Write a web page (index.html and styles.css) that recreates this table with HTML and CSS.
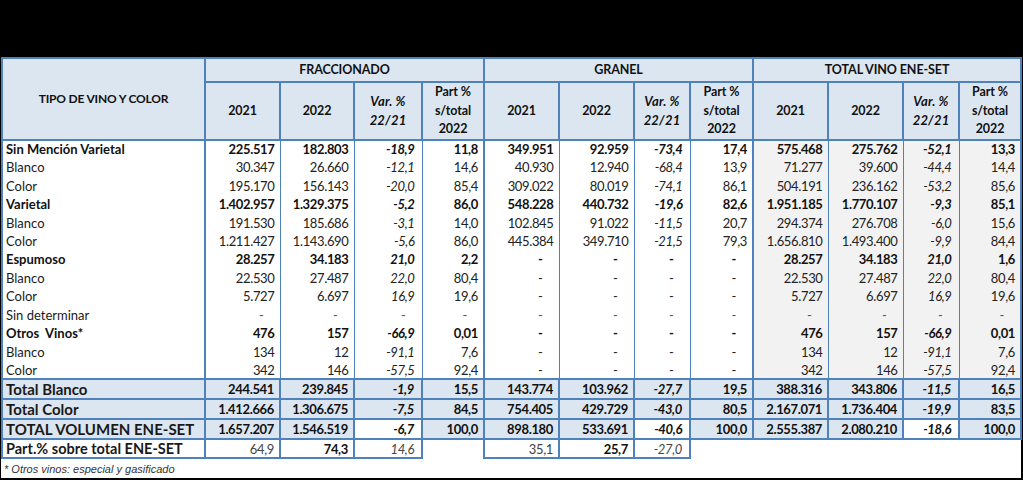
FILE: index.html
```html
<!DOCTYPE html>
<html lang="es">
<head>
<meta charset="utf-8">
<title>Vino ENE-SET</title>
<link rel="stylesheet" href="styles.css">
</head>
<body>
<div class="frame">
  <div class="sheet">
    <table class="t">
      <colgroup>
        <col class="w-lab">
        <col class="w-75"><col class="w-74"><col class="w-68"><col class="w-62">
        <col class="w-75"><col class="w-75"><col class="w-56"><col class="w-63">
        <col class="w-75"><col class="w-75"><col class="w-56"><col class="w-62">
      </colgroup>
      <thead>
        <tr class="h1">
          <th rowspan="2" class="hl">TIPO DE VINO Y COLOR</th>
          <th colspan="4">FRACCIONADO</th>
          <th colspan="4">GRANEL</th>
          <th colspan="4">TOTAL VINO ENE-SET</th>
        </tr>
        <tr class="h2">
          <th>2021</th><th>2022</th><th class="hv">Var. %<br>22/21</th><th>Part %<br>s/total<br>2022</th>
          <th>2021</th><th>2022</th><th class="hv">Var. %<br>22/21</th><th>Part %<br>s/total<br>2022</th>
          <th>2021</th><th>2022</th><th class="hv">Var. %<br>22/21</th><th>Part %<br>s/total<br>2022</th>
        </tr>
      </thead>
      <tbody class="body">
        <tr class="b"><td class="lab">Sin Mención Varietal</td><td>225.517</td><td>182.803</td><td class="v">-18,9</td><td>11,8</td><td class="s">349.951</td><td>92.959</td><td class="v">-73,4</td><td>17,4</td><td class="s t">575.468</td><td class="t">275.762</td><td class="v t">-52,1</td><td class="t e">13,3</td></tr>
        <tr><td class="lab">Blanco</td><td>30.347</td><td>26.660</td><td class="v">-12,1</td><td>14,6</td><td class="s">40.930</td><td>12.940</td><td class="v">-68,4</td><td>13,9</td><td class="s t">71.277</td><td class="t">39.600</td><td class="v t">-44,4</td><td class="t e">14,4</td></tr>
        <tr><td class="lab">Color</td><td>195.170</td><td>156.143</td><td class="v">-20,0</td><td>85,4</td><td class="s">309.022</td><td>80.019</td><td class="v">-74,1</td><td>86,1</td><td class="s t">504.191</td><td class="t">236.162</td><td class="v t">-53,2</td><td class="t e">85,6</td></tr>
        <tr class="b"><td class="lab">Varietal</td><td>1.402.957</td><td>1.329.375</td><td class="v">-5,2</td><td>86,0</td><td class="s">548.228</td><td>440.732</td><td class="v">-19,6</td><td>82,6</td><td class="s t">1.951.185</td><td class="t">1.770.107</td><td class="v t">-9,3</td><td class="t e">85,1</td></tr>
        <tr><td class="lab">Blanco</td><td>191.530</td><td>185.686</td><td class="v">-3,1</td><td>14,0</td><td class="s">102.845</td><td>91.022</td><td class="v">-11,5</td><td>20,7</td><td class="s t">294.374</td><td class="t">276.708</td><td class="v t">-6,0</td><td class="t e">15,6</td></tr>
        <tr><td class="lab">Color</td><td>1.211.427</td><td>1.143.690</td><td class="v">-5,6</td><td>86,0</td><td class="s">445.384</td><td>349.710</td><td class="v">-21,5</td><td>79,3</td><td class="s t">1.656.810</td><td class="t">1.493.400</td><td class="v t">-9,9</td><td class="t e">84,4</td></tr>
        <tr class="b"><td class="lab">Espumoso</td><td>28.257</td><td>34.183</td><td class="v">21,0</td><td>2,2</td><td class="s d">-</td><td class="d">-</td><td class="d">-</td><td class="d">-</td><td class="s t">28.257</td><td class="t">34.183</td><td class="v t">21,0</td><td class="t e">1,6</td></tr>
        <tr><td class="lab">Blanco</td><td>22.530</td><td>27.487</td><td class="v">22,0</td><td>80,4</td><td class="s d">-</td><td class="d">-</td><td class="d">-</td><td class="d">-</td><td class="s t">22.530</td><td class="t">27.487</td><td class="v t">22,0</td><td class="t e">80,4</td></tr>
        <tr><td class="lab">Color</td><td>5.727</td><td>6.697</td><td class="v">16,9</td><td>19,6</td><td class="s d">-</td><td class="d">-</td><td class="d">-</td><td class="d">-</td><td class="s t">5.727</td><td class="t">6.697</td><td class="v t">16,9</td><td class="t e">19,6</td></tr>
        <tr class="lt"><td class="lab">Sin determinar</td><td class="d">-</td><td class="d">-</td><td class="d">-</td><td class="d">-</td><td class="s d">-</td><td class="d">-</td><td class="d">-</td><td class="d">-</td><td class="s t d">-</td><td class="t d">-</td><td class="t d">-</td><td class="t e d">-</td></tr>
        <tr class="b"><td class="lab">Otros&nbsp; Vinos*</td><td>476</td><td>157</td><td class="v">-66,9</td><td>0,01</td><td class="s d">-</td><td class="d">-</td><td class="d">-</td><td class="d">-</td><td class="s t">476</td><td class="t">157</td><td class="v t">-66,9</td><td class="t e">0,01</td></tr>
        <tr><td class="lab">Blanco</td><td>134</td><td>12</td><td class="v">-91,1</td><td>7,6</td><td class="s d">-</td><td class="d">-</td><td class="d">-</td><td class="d">-</td><td class="s t">134</td><td class="t">12</td><td class="v t">-91,1</td><td class="t e">7,6</td></tr>
        <tr><td class="lab">Color</td><td>342</td><td>146</td><td class="v">-57,5</td><td>92,4</td><td class="s d">-</td><td class="d">-</td><td class="d">-</td><td class="d">-</td><td class="s t">342</td><td class="t">146</td><td class="v t">-57,5</td><td class="t e">92,4</td></tr>
      </tbody>
      <tbody class="tot">
        <tr><td class="lab">Total Blanco</td><td>244.541</td><td>239.845</td><td class="v">-1,9</td><td>15,5</td><td>143.774</td><td>103.962</td><td class="v">-27,7</td><td>19,5</td><td>388.316</td><td>343.806</td><td class="v">-11,5</td><td>16,5</td></tr>
        <tr><td class="lab">Total Color</td><td>1.412.666</td><td>1.306.675</td><td class="v">-7,5</td><td>84,5</td><td>754.405</td><td>429.729</td><td class="v">-43,0</td><td>80,5</td><td>2.167.071</td><td>1.736.404</td><td class="v">-19,9</td><td>83,5</td></tr>
        <tr><td class="lab">TOTAL VOLUMEN ENE-SET</td><td>1.657.207</td><td>1.546.519</td><td class="v wh">-6,7</td><td>100,0</td><td>898.180</td><td>533.691</td><td class="v wh">-40,6</td><td>100,0</td><td>2.555.387</td><td>2.080.210</td><td class="v wh">-18,6</td><td>100,0</td></tr>
        <tr class="part"><td class="lab">Part.% sobre total ENE-SET</td><td class="g">64,9</td><td class="bb">74,3</td><td class="v g">14,6</td><td class="x"></td><td class="g">35,1</td><td class="bb">25,7</td><td class="v g">-27,0</td><td class="x"></td><td class="x"></td><td class="x"></td><td class="x"></td><td class="x"></td></tr>
      </tbody>
    </table>
    <div class="note">* Otros vinos: especial y gasificado</div>
  </div>
</div>
</body>
</html>
```

FILE: styles.css
```css
html, body {
  margin: 0;
  padding: 0;
  background: #000;
}

.frame {
  width: 1023px;
  height: 480px;
  box-sizing: border-box;
  padding: 57px 2px 2px 1px;
  background: #000;
  display: flex;
  flex-direction: column;
}

.sheet {
  flex: 1;
  background: #fff;
  display: flex;
  flex-direction: column;
}

.t {
  border-collapse: collapse;
  table-layout: fixed;
  width: 1019px;
  font-family: Lato, "Open Sans", sans-serif;
  font-size: 13px;
  letter-spacing: -0.35px;
  color: #222;
}

.w-lab { width: 203px; }
.w-75 { width: 75px; }
.w-74 { width: 74px; }
.w-68 { width: 68px; }
.w-62 { width: 62px; }
.w-63 { width: 63px; }
.w-56 { width: 56px; }

.t th {
  background: #dce6f1;
  border: 2px solid #4f81bd;
  font-weight: 700;
  font-size: 12.5px;
  letter-spacing: -0.1px;
  color: #111;
  padding: 0;
  line-height: 18.5px;
  text-align: center;
}

.t th.hl { font-size: 12px; letter-spacing: -0.2px; }
.t th.hv { font-style: italic; font-size: 13px; letter-spacing: 0.2px; }

.h1 { height: 24px; }
.h2 { height: 55px; }

.t td {
  padding: 0 5px 0 0;
  text-align: right;
  white-space: nowrap;
  overflow: hidden;
  border-left: 1px solid #4f81bd;
  border-right: 1px solid #4f81bd;
  line-height: 16px;
}

.body tr { height: 18.46px; }

.t td.lab {
  text-align: left;
  padding-left: 3px;
  letter-spacing: 0;
  border-left: 2px solid #4f81bd;
  border-right: 2px solid #4f81bd;
  color: #1a1a1a;
}

.t td.s { border-left: 2px solid #4f81bd; }
.t td.e { border-right: 2px solid #4f81bd; }
.t td.v { font-style: italic; padding-right: 7px; }
.t td.t { background: #f2f2f2; }
.t td.d { padding-right: 16px; }

.body tr.b td { font-weight: 700; color: #111; }
.body tr.lt td.d { color: #555; }

.tot tr { height: 20px; }

.tot td {
  border: 2px solid #4f81bd;
  background: #dce6f1;
  font-weight: 700;
  color: #111;
}

.t .tot td.lab { font-size: 15px; }
.tot td.wh { background: #fff; }

.tot tr.part { height: 19px; }

.tot .part td {
  background: #fff;
  font-weight: 400;
}

.t .tot .part td.lab { font-weight: 700; font-size: 14.5px; }
.tot .part td.g { color: #444; }
.tot .part td.bb { font-weight: 700; color: #111; }
.tot .part td.x { border: none; }

.note {
  font-family: "Liberation Sans", Arial, sans-serif;
  font-style: italic;
  font-size: 11px;
  color: #333;
  padding: 3px 0 0 3px;
  line-height: 14px;
}
```
